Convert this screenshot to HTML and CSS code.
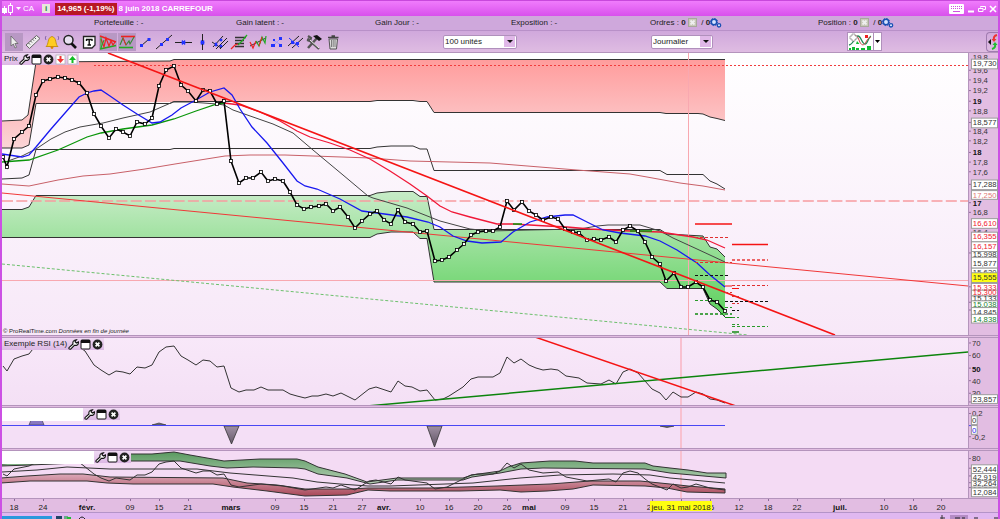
FILE: index.html
```
<!DOCTYPE html>
<html lang="fr">
<head>
  <meta charset="UTF-8">
  <meta name="viewport" content="width=device-width, initial-scale=1.0">
  <title>CARREFOUR</title>
  <link rel="stylesheet" href="styles.css">
</head>
<body>
  <!-- shared icons -->
  <svg class="defs" width="0" height="0">
    <symbol id="wrench" viewBox="0 0 11 11">
      <path d="M1 8.600 5 5Q4.300 2.200 6.600 1.200L8.400.8 7 2.600 8.400 4l2-1.200Q10.800 5.600 8.400 6.400L6.400 6.400 2.600 10.200Q.4 10.400 1 8.600Z" fill="#fff" stroke="#111" stroke-width="1.100"/>
    </symbol>
    <symbol id="maximize" viewBox="0 0 11 11">
      <rect x="1" y="1" width="9" height="9" rx="1" fill="#fff" stroke="#111"/>
      <path d="M1 1h9v3H1z" fill="#111"/>
    </symbol>
    <symbol id="close" viewBox="0 0 11 11">
      <circle cx="5.500" cy="5.500" r="4.900" fill="#222"/>
      <path d="M3.600 3.600l3.800 3.800M7.400 3.600 3.600 7.400" stroke="#fff" stroke-width="1.700"/>
    </symbol>
    <symbol id="gears" viewBox="0 0 12 10">
      <circle cx="4" cy="4" r="2.700" fill="#d8e4ff" stroke="#1c50b4" stroke-width="1.500"/>
      <circle cx="4" cy="4" r="3.600" fill="none" stroke="#1c50b4" stroke-dasharray="1.400 1.400"/>
      <circle cx="9" cy="7.300" r="1.700" fill="#d8e4ff" stroke="#1c50b4" stroke-width="1.300"/>
    </symbol>
    <symbol id="cancel" viewBox="0 0 9 9">
      <rect x=".5" y=".5" width="8" height="8" fill="#c8c8b8" stroke="#a8a89c"/>
      <path d="M2.500 2.500l4 4M6.500 2.500l-4 4" stroke="#eee" stroke-width="1.800"/>
    </symbol>
  </svg>

  <div class="window">
    <header class="titlebar">
      <svg width="12" height="14" viewBox="0 0 12 14">
        <path d="M2.500 4v8M8.500 1v12" stroke="#fff"/>
        <path d="M0 6h5v5H0z" fill="#fff"/>
        <path d="M6.500 3.500h4v7h-4z" fill="#e060f4" stroke="#fff"/>
      </svg>
      <svg width="5" height="3" viewBox="0 0 5 3"><path d="M0 0h5L2.500 3z" fill="#fff"/></svg>
      <span class="symbol">CA</span>
      <span class="info">i</span>
      <span class="quote">14,965 (-1,19%)</span>
      <h1>8 juin 2018 CARREFOUR</h1>
      <div class="window-buttons">
        <button aria-label="Clavier"><svg width="15" height="10" viewBox="0 0 15 10"><rect width="15" height="10" rx="1" fill="#fff"/><path d="M2 2.500h11M2 4.500h11" stroke="#d050e0" stroke-dasharray="1 1"/><path d="M4 7.500h7" stroke="#d050e0"/></svg></button>
        <button aria-label="Réduire"><svg width="8" height="8" viewBox="0 0 8 8"><path d="M1 6.500h6" stroke="#fff" stroke-width="2"/></svg></button>
        <button aria-label="Restaurer"><svg width="8" height="8" viewBox="0 0 8 8"><path d="M2.500 2.500v-1h5v3h-2M.5 3.500h4.500v3H.5z" fill="none" stroke="#fff"/></svg></button>
        <button aria-label="Fermer"><svg width="8" height="8" viewBox="0 0 8 8"><path d="M1 1l6 6M7 1L1 7" stroke="#fff" stroke-width="1.600"/></svg></button>
      </div>
    </header>

    <div class="account">
      <span>Portefeuille : -</span>
      <span>Gain latent : -</span>
      <span>Gain Jour : -</span>
      <span>Exposition : -</span>
      <span>Ordres : <b>0</b> <svg width="9" height="9"><use href="#cancel"/></svg> &nbsp;/ <b>0</b><svg width="12" height="10"><use href="#gears"/></svg></span>
      <span>Position : <b>0</b> <svg width="9" height="9"><use href="#cancel"/></svg> &nbsp;/ <b>0</b><svg width="12" height="10"><use href="#gears"/></svg></span>
    </div>

    <div class="toolbar">
      <div class="tools">
        <button class="on" aria-label="Curseur"><svg viewBox="0 0 18 18"><path d="M6 3v10l2.300-2 1.700 4 1.600-.7-1.700-3.800H13z" fill="#eee" stroke="#666" stroke-width=".8"/></svg></button>
        <button aria-label="Règle"><svg viewBox="0 0 18 18"><path d="M2 12 12.500 2.500l3.500 3L5.500 15.500z" fill="#eee" stroke="#666"/><path d="M4.500 10l1.500 1.500M6.500 8 8 9.500M8.500 6.200 10 7.700M10.500 4.500 12 6" stroke="#555"/></svg></button>
        <button aria-label="Alerte"><svg viewBox="0 0 18 18"><path d="M3 13.500c3-2 1-9 6-10 5 1 3 8 6 10z" fill="#fc2" stroke="#b80" stroke-width=".8"/><circle cx="9" cy="14.500" r="1.400" fill="#d80"/><path d="M3 3Q1.500 5 3 7M15 3q1.500 2 0 4" fill="none" stroke="#86a"/></svg></button>
        <button aria-label="Loupe"><svg viewBox="0 0 18 18"><circle cx="7.500" cy="7" r="4.500" fill="#e8e0f0" stroke="#222" stroke-width="1.500"/><path d="M10.500 10.500 15 15" stroke="#111" stroke-width="2.600"/></svg></button>
        <button aria-label="Texte"><svg viewBox="0 0 18 18"><path d="M3.500 3.500h11.500v8.500l-3 3H3.500z" fill="#fff" stroke="#222" stroke-width="1.300"/><path d="M6 6.500h6.500M9.200 6.500V12M7.500 12h3.500M6.500 6v2M12 6v2" stroke="#111" stroke-width="1.400"/></svg></button>
        <button class="on" aria-label="Triangles"><svg viewBox="0 0 18 18"><path d="M1 3l16 6" stroke="#e22" stroke-width="1.600"/><path d="M1 16l16-3.500" stroke="#2a2" stroke-width="1.600"/><path d="M2 6l3 8 2-9 3 8 2-5 2 4 2-3" fill="none" stroke="#e22" stroke-width="1.200"/><path d="M2 4v11l3-8" fill="none" stroke="#2a2"/></svg></button>
        <button class="on" aria-label="Supports et résistances"><svg viewBox="0 0 18 18"><path d="M3 3.500h14" stroke="#e22" stroke-width="1.600"/><path d="M1 14.500h14" stroke="#2a2" stroke-width="1.600"/><path d="M2 12l3-7 3 7 3-4 1 3 4-7" fill="none" stroke="#383" stroke-width="1.100"/><path d="M5 5l3 7" stroke="#e22"/></svg></button>
        <button aria-label="Segment"><svg viewBox="0 0 18 18"><path d="M5.500 12.500l7-6" stroke="#222"/><path d="M4 11h3v3H4zM11.500 5h3v3h-3z" fill="#23f"/></svg></button>
        <button aria-label="Droite"><svg viewBox="0 0 18 18"><path d="M1 16 17 2" stroke="#222"/><path d="M5 10h3v3H5zM11 5h3v3h-3z" fill="#23f"/></svg></button>
        <button aria-label="Droite horizontale"><svg viewBox="0 0 18 18"><path d="M1 9.500h17" stroke="#222"/><path d="M8 7.500l3 4M11 7.500l-3 4M7.500 9.500h4" stroke="#23f" stroke-width="1.300"/></svg></button>
        <button aria-label="Droite verticale"><svg viewBox="0 0 18 18"><path d="M9.500 1v16" stroke="#222"/><path d="M8 7.500l3 4M11 7.500l-3 4M7.500 9.500h4" stroke="#23f" stroke-width="1.300"/></svg></button>
        <button aria-label="Fourchette"><svg viewBox="0 0 18 18"><path d="M2 14 12 3M5 16 16 5M1 9l9 6M9 16l8-8" stroke="#222"/><path d="M4 10h2v3H4zM9 6h2v2H9zM9 12h2v2H9z" fill="#23f" stroke="#23f" stroke-width=".6"/></svg></button>
        <button aria-label="Fibonacci"><svg viewBox="0 0 18 18"><path d="M5 4.500h11M5 7.500h9M5 10.500h9M5 13.500h9" stroke="#333" stroke-width="1.300"/><path d="M1 16l4-4 3-1" fill="none" stroke="#e22" stroke-width="1.300"/><path d="M8 12l4-4 5-6" fill="none" stroke="#2a2" stroke-width="1.300"/></svg></button>
        <button aria-label="Régression"><svg viewBox="0 0 18 18"><path d="M1 13 17 5" stroke="#333"/><path d="M1 9l3 6 3-7" fill="none" stroke="#e22" stroke-width="1.200"/><path d="M7 8l3 5 3-9 3 6 1-7" fill="none" stroke="#2a2" stroke-width="1.200"/><path d="M10 13l3-9" stroke="#e22"/></svg></button>
        <button aria-label="Flèche"><svg viewBox="0 0 18 18"><path d="M5 13l8-8M5 7l8 5" stroke="#99f"/><path d="M3 11h4v3H3zM11 4h3v3h-3zM11 11h3v3h-3zM5 6h2v2H5z" fill="#23f"/></svg></button>
        <button aria-label="Canal"><svg viewBox="0 0 18 18"><path d="M2 13 13 3M6 15 17 5" stroke="#222"/><path d="M3 5l10 9" stroke="#23f"/><path d="M5 8h3v3H5zM10 9h3v3h-3z" fill="#23f"/></svg></button>
        <button aria-label="Outils"><svg viewBox="0 0 18 18"><path d="M3 15l9-10" stroke="#555" stroke-width="2.500"/><path d="M8 3l6 5 3-2-5-4z" fill="#111"/><path d="M2.500 5.500 5 8l9 8M3 3l3 2-1 3-3-1" fill="none" stroke="#555" stroke-width="2.200"/><path d="M5 7l9 8" stroke="#eee"/></svg></button>
        <button aria-label="Supprimer"><svg viewBox="0 0 18 18"><path d="M5 6h8.500l-1 10H6z" fill="#ddd" stroke="#555"/><path d="M4 4.500h10.500M7.500 3h3.500" stroke="#444" stroke-width="1.500"/><path d="M7.500 7v7M9.200 7v7M11 7v7" stroke="#666" stroke-width=".8"/></svg></button>
      </div>
      <label class="picker units">
        <select aria-label="Nombre d'unités"><option>100 unités</option></select>
        <span class="caret"></span>
      </label>
      <label class="picker period">
        <select aria-label="Période"><option>Journalier</option></select>
        <span class="caret"></span>
      </label>
      <button class="indicators" aria-label="Indicateurs">
        <svg width="25" height="17" viewBox="0 0 25 17">
          <path d="M1 12c5-1 6-9 9-9s4 8 7 8 3-7 6-8" fill="none" stroke="#285" stroke-width="1.300"/>
          <path d="M2 6c4-4 7-5 9 1s5 6 7 2 3-4 5-5" fill="none" stroke="#c44"/>
          <path d="M1 15h2v2H1zM4 14h3v3H4zM8 15h3v2H8zM13 15h4v2h-4zM19 13h4v4h-4zM9 8l2.500 3H8z" fill="#1b3"/>
          <path d="M17 2h3v3h-3z" fill="#e22"/>
          <path d="M4 1h3v2h2v3H7v2H4V6H2V3h2z" fill="#fff" stroke="#888" stroke-width=".7"/>
        </svg>
        <span class="arrow"><svg width="5" height="3" viewBox="0 0 5 3"><path d="M0 0h5L2.500 3z"/></svg></span>
      </button>
      <button class="collapse" aria-label="Replier">
        <svg width="11" height="18" viewBox="0 0 11 18">
          <path d="M4 6v6L1 9z" fill="#111"/>
          <path d="M10 2Q6 3 7 7" fill="none" stroke="#e33" stroke-width="2"/><path d="M4.500 6h5L7 9z" fill="#e33"/>
          <path d="M5 16q4-1 3-5" fill="none" stroke="#2b3" stroke-width="2"/><path d="M5.500 12h5L8 9z" fill="#2b3"/>
        </svg>
      </button>
    </div>

    <main class="charts">
      <section class="panel price">
        <div class="panel-title">
          <span>Prix</span>
          <button aria-label="Réglages"><svg><use href="#wrench"/></svg></button>
          <button aria-label="Agrandir"><svg><use href="#maximize"/></svg></button>
          <button aria-label="Fermer"><svg><use href="#close"/></svg></button>
          <button aria-label="Descendre"><svg viewBox="0 0 11 11"><rect x="1" y="1" width="9" height="9" fill="#fff" stroke="#aaa" stroke-width=".7"/><path d="M4.500 2h2v3H9L5.500 9 2 5h2.500z" fill="#e33"/></svg></button>
          <button aria-label="Monter"><svg viewBox="0 0 11 11"><rect x="1" y="1" width="9" height="9" fill="#fff" stroke="#aaa" stroke-width=".7"/><path d="M4.500 9h2V6H9L5.500 2 2 6h2.500z" fill="#1b2"/></svg></button>
        </div>
        <svg class="plot" viewBox="2 53 966 282" preserveAspectRatio="none">
          <defs>
            <linearGradient id="redBand" gradientUnits="userSpaceOnUse" x1="0" y1="59" x2="0" y2="150">
              <stop offset="0" stop-color="#ff9c9c"/><stop offset="1" stop-color="#fbd6d8"/>
            </linearGradient>
            <linearGradient id="greenBand" gradientUnits="userSpaceOnUse" x1="0" y1="191" x2="0" y2="317">
              <stop offset="0" stop-color="#c8ecc8"/><stop offset="1" stop-color="#5cd05c"/>
            </linearGradient>
            <marker id="point" viewBox="0 0 4 4" refX="2" refY="2" markerWidth="4" markerHeight="4" markerUnits="userSpaceOnUse">
              <rect x=".5" y=".5" width="3" height="3" fill="#fff" stroke="#000" stroke-width=".8"/>
            </marker>
          </defs>

          <!-- bands -->
          <path fill="url(#redBand)" d="M2 121L22 120 28 115 36 62 170 61 174 59.500H725V120.500L717 118.500 710 117 703 114 698 113.500H666L660 112H434L427 102 413 100H377L370 102H174L36 103 29 145 22 148H2Z"/>
          <path fill="url(#greenBand)" d="M2 209H22L29 207 36 195.500H370L377 193 391 191H413L420 196H427L434 230H660L667 234 703 236 710 247 717 249 725 257V317L717 309 710 304 703 289 667 288 660 282H434L427 238H420L413 232H391L377 234 370 237.500H2Z"/>
          <g class="thin">
            <path d="M2 121L22 120 28 115 36 62 170 61 174 59.500H725"/>
            <path d="M2 148H22L29 145 36 103.500H170L174 101.500H370L377 100.500H413L420 101.500H427L434 112.500H660L666 113.500H698L703 114 710 117 717 118.500 725 120.500"/>
            <path d="M2 179L22 178 29 175 36 149.500H170L174 148.500H370L377 147 391 146H413L420 149H427L434 170.500H660L667 174.500H703L710 181 717 184 725 189"/>
            <path d="M2 209.500H22L29 207 36 195.500H370L377 193 391 191.500H413L420 196.500H427L434 229.500H660L667 234 703 236 710 247 717 249 725 257"/>
            <path d="M2 237.500H370L377 234 391 232H413L420 238.500H427L434 282H660L667 288.500H703L710 304 717 309 725 317"/>
          </g>

          <!-- cursor -->
          <path d="M2 280.500H968M688.500 53V335" stroke="#f8a8b0" fill="none"/>

          <path d="M2 201H968" stroke="#f79ca0" stroke-width="1.600" stroke-dasharray="11 3.300"/>
          <path d="M94 65.500H968" stroke="#f03c3c" stroke-dasharray="2 2"/>
          <path d="M2 264L748 335" stroke="#6cc06c" stroke-dasharray="3 2"/>
          <path d="M2 193L968 286" stroke="#f03838"/>

          <!-- moving averages -->
          <path class="line" stroke="#c86068" d="M2 184L29 186 58 180 83 176 110 174 145 169 175 164 225 156 250 155H285L370 158 410 161 490 163 577 170 630 174 647 177 680 183 703 186 725 190"/>
          <path class="line" stroke="#444" d="M8 161L22 156 36 149 51 139 65 132 80 127 103 123 123 118 150 112 173 102 190 102 217 104 224 105 233 110 273 124 293 133 313 150 343 175 368 196 373 198 407 208 440 221 470 229 490 231 530 230 580 229 597 226 608 225H640L660 231 673 238 697 249 725 262"/>
          <path class="line bold" stroke="#0a960a" d="M2 162L29 160 58 150 87 137 101 133 123 129 152 125 174 119 196 111 217 104 224 103"/>
          <path class="line bold" stroke="#f01838" d="M224 103L240 105 260 112 280 121 297 131 310 137 330 143 350 150 370 159 390 171 410 184 427 196 440 206 452 212 470 217 497 224 513 224 547 226 567 227 590 229 630 231 660 232 673 234 693 237 707 240 725 248"/>
          <path class="line bold" stroke="#0a960a" d="M513 224H522M630 231H652"/>
          <path class="line bold" stroke="#1818f0" d="M2 154L22 157 29 155 36 147 51 129 65 113 79 97 87 93 94 91 101 90 110 96 123 105 137 114 152 123 160 122 172 115 181 108 196 100 210 92 224 88 232 95 240 109 252 127 267 143 283 163 297 181 305 186 317 189 340 199 362 211 377 213 407 217 428 222 440 227 453 236 467 241 482 243 501 242 513 232 530 222 547 217 565 215 573 215 587 222 603 230 620 233 645 236 660 241 677 250 697 263 710 275 725 287"/>

          <polyline class="quotes" points="3,157 7,167 14,139 22,132 29,126 36,95 43,81 50,79 58,77 65,78 72,80 79,83 87,93 94,114 101,126 109,138 116,129 123,132 130,136 137,122 145,124 152,118 159,86 166,70 174,66 181,85 188,91 196,101 203,90 210,91 217,104 224,101 231,161 239,183 246,178 253,178 261,172 268,181 275,179 283,181 290,192 297,205 304,209 311,207 319,206 326,204 333,211 340,207 348,217 355,228 362,221 370,214 377,211 384,220 391,224 398,210 405,222 413,224 420,232 427,231 435,261 442,260 449,257 457,250 464,244 471,235 478,232 486,231 493,231 500,227 507,201 514,210 522,202 529,211 536,215 543,220 551,217 558,219 565,229 573,232 579,233 587,240 594,239 601,240 609,237 616,242 623,230 630,226 638,231 645,242 652,257 660,264 666,281 674,273 681,287 688,287 696,282 703,287 710,300 717,302 725,311"/>
          <path d="M108 53L835 335" stroke="#f51414" stroke-width="1.600"/>

          <!-- levels -->
          <g class="levels">
            <path stroke="#f51414" d="M695 224H732M732 244.500H768" stroke-width="1.500"/>
            <path stroke="#f51414" d="M725 286H732M732 288.500H739"/>
            <path stroke="#e03030" stroke-dasharray="3 2" d="M695 237.500H729M695 262.500H732M732 285.500H768M725 292.500H732M732 296.500H739M732 303.500H739"/>
            <path stroke="#e83838" stroke-dasharray="3 2" stroke-width="1.700" d="M732 260H768"/>
            <path stroke="#111" stroke-dasharray="3 2" d="M695 275.500H729M725 301.500H768M732 310.500H739"/>
            <path stroke="#2a9a2a" stroke-dasharray="3 2" d="M695 300.500H711M725 307.500H732M732 317.500H739M732 324.500H739M732 326.500H768"/>
            <path stroke="#128a12" stroke-dasharray="3 2" stroke-width="1.500" d="M695 314H732"/>
            <path stroke="#128a12" d="M725 317.500H732"/>
            <path stroke="#128a12" stroke-width="1.500" d="M732 332H739"/>
          </g>
        </svg>
        <p class="copyright">© ProRealTime.com <i>Données en fin de journée</i></p>
        <svg class="axis" viewBox="968 53 30 282" width="30" height="282">
          <path class="ticks" d="M968 66h2m-2 10h2m-2 11h2m-2 11h2m-2 10h2m-2 12h2m-2 9h2m-2 10h2m-2 12h2m-2 10h2m-2 10h2m-2 13h2m-2 19h2m-2 10h2m-2 42h2m-2 35h2m-2 16h2m-2 8h2"/>
          <text x="972" y="55">19,8</text>
          <text x="972" y="69">19,6</text>
          <text x="972" y="79">19,4</text>
          <text x="972" y="90">19,2</text>
          <text x="972" y="101" class="strong">19</text>
          <text x="972" y="111">18,8</text>
          <text x="972" y="132">18,4</text>
          <text x="972" y="142">18,2</text>
          <text x="972" y="154" class="strong">18</text>
          <text x="972" y="164">17,8</text>
          <text x="972" y="174">17,6</text>
          <text x="972" y="206" class="strong">17</text>
          <text x="972" y="216">16,8</text>
          <text x="972" y="236">16,4</text>
          <rect x="970.500" y="54.500" width="27" height="10"/><text x="972" y="62">19,730</text>
          <rect x="970.500" y="115.500" width="27" height="10"/><text x="972" y="123">18,577</text>
          <rect x="970.500" y="179.500" width="27" height="10"/><text x="972" y="187">17,288</text>
          <rect x="970.500" y="190.500" width="27" height="9"/><text x="972" y="198" class="salmon">17,250</text>
          <rect x="970.500" y="219.500" width="27" height="10"/><text x="972" y="227" class="red">16,610</text>
          <rect x="970.500" y="251.500" width="27" height="10"/><text x="972" y="259">15,998</text>
          <rect x="970.500" y="233.500" width="27" height="10"/><text x="972" y="241" class="red">16,355</text>
          <rect x="970.500" y="243.500" width="27" height="10"/><text x="972" y="251" class="red">16,157</text>
          <rect x="970.500" y="270.500" width="27" height="10"/><text x="972" y="278">15,620</text>
          <rect x="970.500" y="259.500" width="27" height="11"/><text x="972" y="268">15,877</text>
          <rect x="970.500" y="286.500" width="27" height="10"/><text x="972" y="293" class="red">15,333</text>
          <rect x="970.500" y="275.500" width="27" height="10" class="current"/><text x="972" y="283">15,555</text>
          <rect x="970.500" y="293.500" width="27" height="6"/><text x="972" y="299" class="red">15,300</text>
          <rect x="970.500" y="299.500" width="27" height="6"/><text x="972" y="305">15,133</text>
          <rect x="970.500" y="304.500" width="27" height="7"/><text x="972" y="311" class="green">15,038</text>
          <rect x="970.500" y="311.500" width="27" height="8"/><text x="972" y="319">14,845</text>
          <rect x="970.500" y="318.500" width="27" height="9"/><text x="972" y="326" class="green">14,838</text>
        </svg>
      </section>

      <section class="panel rsi">
        <div class="panel-title">
          <span>Exemple RSI (14)</span>
          <button aria-label="Réglages"><svg><use href="#wrench"/></svg></button>
          <button aria-label="Agrandir"><svg><use href="#maximize"/></svg></button>
          <button aria-label="Fermer"><svg><use href="#close"/></svg></button>
        </div>
        <svg class="plot" viewBox="2 338 966 67" preserveAspectRatio="none">
          <path d="M681 338V405" stroke="#f8c0d0" stroke-width="2"/>
          <polyline class="thin" points="3,366 7,371 14,359 22,356 29,354 36,345 43,343 58,340 72,342 85,351 94,365 101,370 109,375 116,371 123,372 130,374 137,367 145,368 152,365 159,352 166,347 174,346 181,356 188,360 196,365 203,360 210,361 217,367 224,366 231,388 239,392 246,390 254,390 261,387 268,390 283,390 290,394 297,396 305,398 312,396 318,396 326,394 333,396 341,393 355,400 369,389 376,387 391,392 398,381 405,386 412,387 420,391 427,390 435,400 443,399 449,396 463,387 471,379 478,377 493,377 500,373 507,357 514,363 521,359 529,365 536,368 543,370 551,369 558,370 566,376 579,378 587,383 601,384 609,380 616,384 623,372 630,369 638,373 645,381 652,389 660,393 666,400 673,392 681,397 688,397 696,392 703,394 710,399 717,400 725,403"/>
          <path d="M367 406L968 352" stroke="#0c840c" stroke-width="1.500"/>
          <path d="M535 337L736 406" stroke="#f51414" stroke-width="1.500"/>
        </svg>
        <svg class="axis" viewBox="968 338 30 67" width="30" height="67">
          <path class="ticks" d="M968 342h2m-2 13h2m-2 13h2m-2 13h2m-2 13h2m-2 9h2"/>
          <text x="971" y="345">70</text>
          <text x="971" y="358">60</text>
          <text x="971" y="372" class="strong">50</text>
          <text x="971" y="384">40</text>
          <text x="971" y="397">30</text>
          <rect x="970.500" y="395.500" width="27" height="9"/><text x="972" y="403">23,857</text>
        </svg>
      </section>

      <section class="panel signal">
        <div class="panel-title">
          <span class="blank"></span>
          <button aria-label="Réglages"><svg><use href="#wrench"/></svg></button>
          <button aria-label="Agrandir"><svg><use href="#maximize"/></svg></button>
          <button aria-label="Fermer"><svg><use href="#close"/></svg></button>
        </div>
        <svg class="plot" viewBox="2 408 966 40" preserveAspectRatio="none">
          <defs>
            <linearGradient id="spike" x1="0" y1="0" x2="0" y2="1">
              <stop offset="0" stop-color="#a090a4"/><stop offset="1" stop-color="#5c5060"/>
            </linearGradient>
          </defs>
          <path d="M681 408V448" stroke="#f8c0d0" stroke-width="2"/>
          <path d="M29 425L31 420H42L44 425Z" fill="#8878c0" stroke="#445" stroke-width=".7"/>
          <path d="M152 425L159 423 166 425Z" fill="#778" stroke="#333" stroke-width=".7"/>
          <path d="M224 426H239L231.500 444ZM427 426H442L434.500 447Z" fill="url(#spike)" stroke="#333" stroke-width=".8"/>
          <path d="M660 426L667 427.500 674 426Z" fill="#778" stroke="#333" stroke-width=".7"/>
          <path d="M2 425.500H725" stroke="#4848f4"/>
        </svg>
        <svg class="axis" viewBox="968 408 30 40" width="30" height="40">
          <path class="ticks" d="M968 413h2m-2 24h2"/>
          <path d="M968 425.500h2" stroke="#4848f4"/>
          <text x="971" y="416">0,2</text>
          <text x="971" y="440">-0,2</text>
          <rect x="970.500" y="415.500" width="6" height="9"/><text x="971" y="423">0</text>
          <rect x="970.500" y="425.500" width="6" height="9"/><text x="971" y="433" class="blue">0</text>
        </svg>
      </section>

      <section class="panel bands">
        <div class="panel-title">
          <span class="blank"></span>
          <button aria-label="Réglages"><svg><use href="#wrench"/></svg></button>
          <button aria-label="Agrandir"><svg><use href="#maximize"/></svg></button>
          <button aria-label="Fermer"><svg><use href="#close"/></svg></button>
        </div>
        <svg class="plot" viewBox="2 451 966 47" preserveAspectRatio="none">
          <defs>
            <linearGradient id="upper" gradientUnits="userSpaceOnUse" x1="0" y1="452" x2="0" y2="484">
              <stop offset="0" stop-color="#5a9a60"/><stop offset="1" stop-color="#b8d0b8"/>
            </linearGradient>
            <linearGradient id="lower" gradientUnits="userSpaceOnUse" x1="0" y1="474" x2="0" y2="496">
              <stop offset="0" stop-color="#dca8b8"/><stop offset="1" stop-color="#a84858"/>
            </linearGradient>
          </defs>
          <path d="M681 451V498" stroke="#f8c0d0" stroke-width="2"/>
          <path class="thin upper" d="M1 464L131 454 152 454 174 452 190 455 224 461 260 459 297 459 305 461 318 467 345 474 367 482 397 478 463 478 472 475 500 471 508 467 521 463 550 461 575 461 593 463 645 463 653 466 670 468 688 470 707 473H726V478L670 473 645 469 543 468 521 469 500 473 472 477 463 480 397 480 370 484 347 478 318 474 305 469 297 468 253 467 227 468 210 466 180 461 131 461 100 462 30 465 1 466Z"/>
          <path class="thin lower" d="M1 478L27 476 60 474H83L110 477 223 478 247 483 277 485 305 489H350L368 488 430 488 497 486 550 484 590 481H640L670 484 688 486 725 489V493L687 492 667 488 645 486 593 485 573 489 547 491 521 492 500 490 460 491H390L368 490 347 495 305 496 267 491 233 487 213 484H133L107 483 87 481H30L1 483Z"/>
          <polyline class="thin" points="2,472 37,470 67,467 110,469 197,469 230,473 293,478 317,482 340,484 368,486 390,486 473,483 520,478 560,475 613,474 650,475 670,478 725,483"/>
          <polyline class="thin" points="3,474 7,476 14,469 29,466 33,464 40,461 58,459 80,463 84,466 94,474 101,478 109,481 116,478 130,480 137,475 145,475 152,472 159,464 166,462 174,461 181,468 196,473 203,471 210,471 217,475 224,474 231,485 239,487 261,484 283,486 305,490 326,487 333,488 341,485 355,490 369,481 376,480 391,484 398,477 405,480 427,483 435,489 447,487 471,475 478,474 493,474 500,471 507,463 514,468 521,464 529,470 543,473 558,472 566,477 587,481 609,479 616,482 623,473 630,471 638,473 645,479 652,484 667,490 673,484 681,488 688,487 696,484 710,488 725,490"/>
        </svg>
        <svg class="axis" viewBox="968 451 30 47" width="30" height="47">
          <path class="ticks" d="M968 458h2m-2 10h2m-2 8h2m-2 7h2m-2 5h2"/>
          <text x="971" y="461">80</text>
          <rect x="970.500" y="486.500" width="27" height="9"/><text x="972" y="493">16,290</text>
          <rect x="970.500" y="479.500" width="27" height="8"/><text x="972" y="486">32,264</text>
          <rect x="970.500" y="472.500" width="27" height="8"/><text x="972" y="480">42,919</text>
          <rect x="970.500" y="464.500" width="27" height="9"/><text x="972" y="472">52,444</text>
          <rect x="970.500" y="488.500" width="27" height="9"/><text x="972" y="496">12,084</text>
        </svg>
      </section>
    </main>

    <svg class="dates" viewBox="2 499 996 13">
      <path class="ticks" d="M14.500 499v2M43.500 499v2M86.500 499v2M130.500 499v2M159.500 499v2M188.500 499v2M231.500 499v2M275.500 499v2M304.500 499v2M333.500 499v2M362.500 499v2M384.500 499v2M420.500 499v2M449.500 499v2M478.500 499v2M507.500 499v2M528.500 499v2M565.500 499v2M594.500 499v2M623.500 499v2M652.500 499v2M681.500 499v2M710.500 499v2M739.500 499v2M768.500 499v2M797.500 499v2M840.500 499v2M884.500 499v2M913.500 499v2M941.500 499v2"/>
      <text x="14" y="510">18</text>
      <text x="43" y="510">24</text>
      <text x="87" y="510" class="strong">févr.</text>
      <text x="130" y="510">09</text>
      <text x="159" y="510">15</text>
      <text x="188" y="510">21</text>
      <text x="231" y="510" class="strong">mars</text>
      <text x="275" y="510">09</text>
      <text x="304" y="510">15</text>
      <text x="333" y="510">21</text>
      <text x="362" y="510">27</text>
      <text x="384" y="510" class="strong">avr.</text>
      <text x="420" y="510">10</text>
      <text x="449" y="510">16</text>
      <text x="478" y="510">20</text>
      <text x="507" y="510">26</text>
      <text x="529" y="510" class="strong">mai</text>
      <text x="565" y="510">09</text>
      <text x="594" y="510">15</text>
      <text x="623" y="510">21</text>
      <text x="649" y="510">2</text>
      <text x="712" y="510">6</text>
      <rect x="650" y="501" width="62" height="10" class="current"/>
      <text x="681" y="510">jeu. 31 mai 2018</text>
      <text x="739" y="510">12</text>
      <text x="768" y="510">18</text>
      <text x="797" y="510">22</text>
      <text x="840" y="510" class="strong">juil.</text>
      <text x="884" y="510">10</text>
      <text x="913" y="510">16</text>
      <text x="941" y="510">20</text>
    </svg>

    <footer class="statusbar">
      <span class="tab"></span>
      <svg width="50" height="3" viewBox="0 0 50 3"><path d="M4 0h6v3H4z" fill="#246"/><path d="M12 0h4v3h-4z" fill="#6a8"/><path d="M15 1h4v2h-4z" fill="#2b3"/><path d="M27 3q3-4 6 0" fill="none" stroke="#222"/></svg>
      <svg class="right" width="70" height="4" viewBox="0 0 70 4"><path d="M14 0v4M12 3h5" stroke="#333"/><path d="M22 0h18v4H22z" fill="#b48cc4"/><path d="M27 3h5M34 3h3M46 3h4M66 3h4" stroke="#222"/></svg>
    </footer>
  </div>
</body>
</html>
```
FILE: styles.css
```
* {
  box-sizing: border-box;
}
body {
  margin: 0;
  font-family: "Liberation Sans", Arial, sans-serif;
  font-size: 8px;
  line-height: 10px;
  color: #222;
  background: #e2bde2;
}
button {
  padding: 0;
  border: 0;
  background: none;
  font: inherit;
}
svg {
  display: block;
}
.defs {
  position: absolute;
}
.window {
  min-height: 100vh;
  display: flex;
  flex-direction: column;
  border: solid #cc50e4;
  border-width: 0 2px;
}

/* title bar */
.titlebar {
  height: 16px;
  display: flex;
  align-items: center;
  gap: 2px;
  color: #fff;
  font-weight: bold;
  border-top: 1px solid #c848dc;
  background: linear-gradient(#f07cfc, #d850ec);
}
.symbol {
  font-weight: normal;
}
.info {
  width: 8px;
  height: 9px;
  margin: 0 3px 0 6px;
  line-height: 9px;
  text-align: center;
  color: #287848;
  background: #e8e8dc;
}
.quote {
  padding: 1px 2px;
  background: #b81824;
}
.titlebar h1 {
  margin: 0;
  font-size: 8px;
}
.window-buttons {
  display: flex;
  align-items: center;
  gap: 3px;
  margin-left: auto;
  padding-right: 1px;
}

/* account line */
.account {
  height: 15px;
  display: grid;
  grid-template-columns: 142fr 139fr 136fr 139fr 168fr 180fr;
  align-items: center;
  padding-left: 92px;
  background: #cfa8dc;
  border-bottom: 1px solid #b890c8;
}
.account svg {
  display: inline-block;
  vertical-align: text-top;
}

/* toolbar */
.toolbar {
  height: 21px;
  display: grid;
  grid-template-columns: 438fr 208fr 196fr 139fr 12px;
  align-items: center;
  padding-left: 3px;
  background: linear-gradient(#d0a8dc, #dfbce2);
}
.tools {
  width: 337px;
  display: flex;
  justify-content: space-between;
}
.tools button {
  width: 18px;
  height: 18px;
}
.tools .on {
  background: #b898c4;
}
.picker {
  height: 14px;
  display: flex;
  align-items: center;
  padding-right: 1px;
  background: #fff;
  border: 1px solid #b090bc;
  border-radius: 2px;
}
.units {
  width: 74px;
}
.period {
  width: 62px;
}
.picker select {
  flex: 1;
  min-width: 0;
  appearance: none;
  padding: 0 1px;
  border: 0;
  background: none;
  font: inherit;
  color: #222;
}
.caret {
  width: 11px;
  height: 11px;
  display: grid;
  place-items: center;
  background: #e0b8e8;
}
.caret::before {
  content: "";
  border: 3px solid transparent;
  border-top-color: #111;
  border-bottom: 0;
}
.indicators {
  width: 35px;
  height: 19px;
  display: flex;
  align-items: center;
  background: #fff;
  border: 1px solid #b090bc;
}
.arrow {
  align-self: stretch;
  flex: 1;
  display: grid;
  place-items: center;
  border-left: 1px solid #b090bc;
}
.collapse {
  border: solid #a07cb0;
  border-width: 1px 0 1px 1px;
  border-radius: 4px 0 0 4px;
}

/* chart panels */
.charts {
  display: flex;
  flex-direction: column;
  gap: 1px;
}
.panel {
  position: relative;
  display: flex;
  border: solid #b494bc;
  border-width: 1px 0;
}
.plot {
  flex: 1;
  min-width: 0;
}
.price .plot {
  height: 282px;
  background: linear-gradient(#fff, #f7e8f8);
}
.rsi .plot {
  height: 67px;
  background: linear-gradient(#f8e8f9, #f4e0f5);
}
.signal .plot {
  height: 40px;
  background: #f4dff6;
}
.bands .plot {
  height: 47px;
  background: #f4dbf4;
}
.panel-title {
  position: absolute;
  top: 0;
  left: 0;
  height: 12px;
  display: flex;
  align-items: center;
  gap: 1px;
  padding: 0 1px 0 2px;
  background: linear-gradient(#f0daf4, #dcb8e4);
}
.panel-title svg {
  width: 11px;
  height: 11px;
}
.signal .panel-title,
.bands .panel-title {
  padding-left: 0;
}
.blank {
  align-self: flex-start;
  width: 81px;
  height: 13px;
  background: #fff;
}
.bands .blank {
  width: 92px;
}
.copyright {
  position: absolute;
  left: 1px;
  bottom: 0;
  margin: 0;
  font-size: 6px;
  line-height: 7px;
}
.axis {
  background: #e2bde2;
  border-left: 1px solid #b494bc;
}
.axis text {
  fill: #333;
}
.axis .strong,
.dates .strong {
  font-weight: bold;
  fill: #111;
}
.axis rect {
  fill: #fff;
  stroke: #999;
  stroke-width: 1px;
}
.axis .salmon {
  fill: #e07878;
}
.axis .red {
  fill: #f01830;
}
.axis .green {
  fill: #1c8030;
}
.axis .blue {
  fill: #2020f0;
}
.axis .current,
.dates .current {
  fill: #ffff10;
}
.ticks {
  fill: none;
  stroke: #8c6c98;
}
.thin {
  fill: none;
  stroke: #333;
  stroke-width: 1px;
}
.upper {
  fill: url(#upper);
}
.lower {
  fill: url(#lower);
}
.line {
  fill: none;
  stroke-width: 1px;
}
.bold {
  stroke-width: 1.3px;
}
.levels {
  fill: none;
}
.quotes {
  fill: none;
  stroke: #000;
  stroke-width: 1.6px;
  marker-start: url(#point);
  marker-mid: url(#point);
  marker-end: url(#point);
}

.dates {
  width: 100%;
  font-size: 8px;
  text-anchor: middle;
  background: #e2bde2;
}
.dates text {
  fill: #222;
}

.statusbar {
  flex: 1;
  min-height: 7px;
  display: flex;
  align-items: flex-end;
  background: #e0b8f0;
  border-top: 1px solid #b494c8;
}
.tab {
  width: 50px;
  height: 3px;
  background: #2a98dc;
}
.statusbar .right {
  margin-left: auto;
}
```
